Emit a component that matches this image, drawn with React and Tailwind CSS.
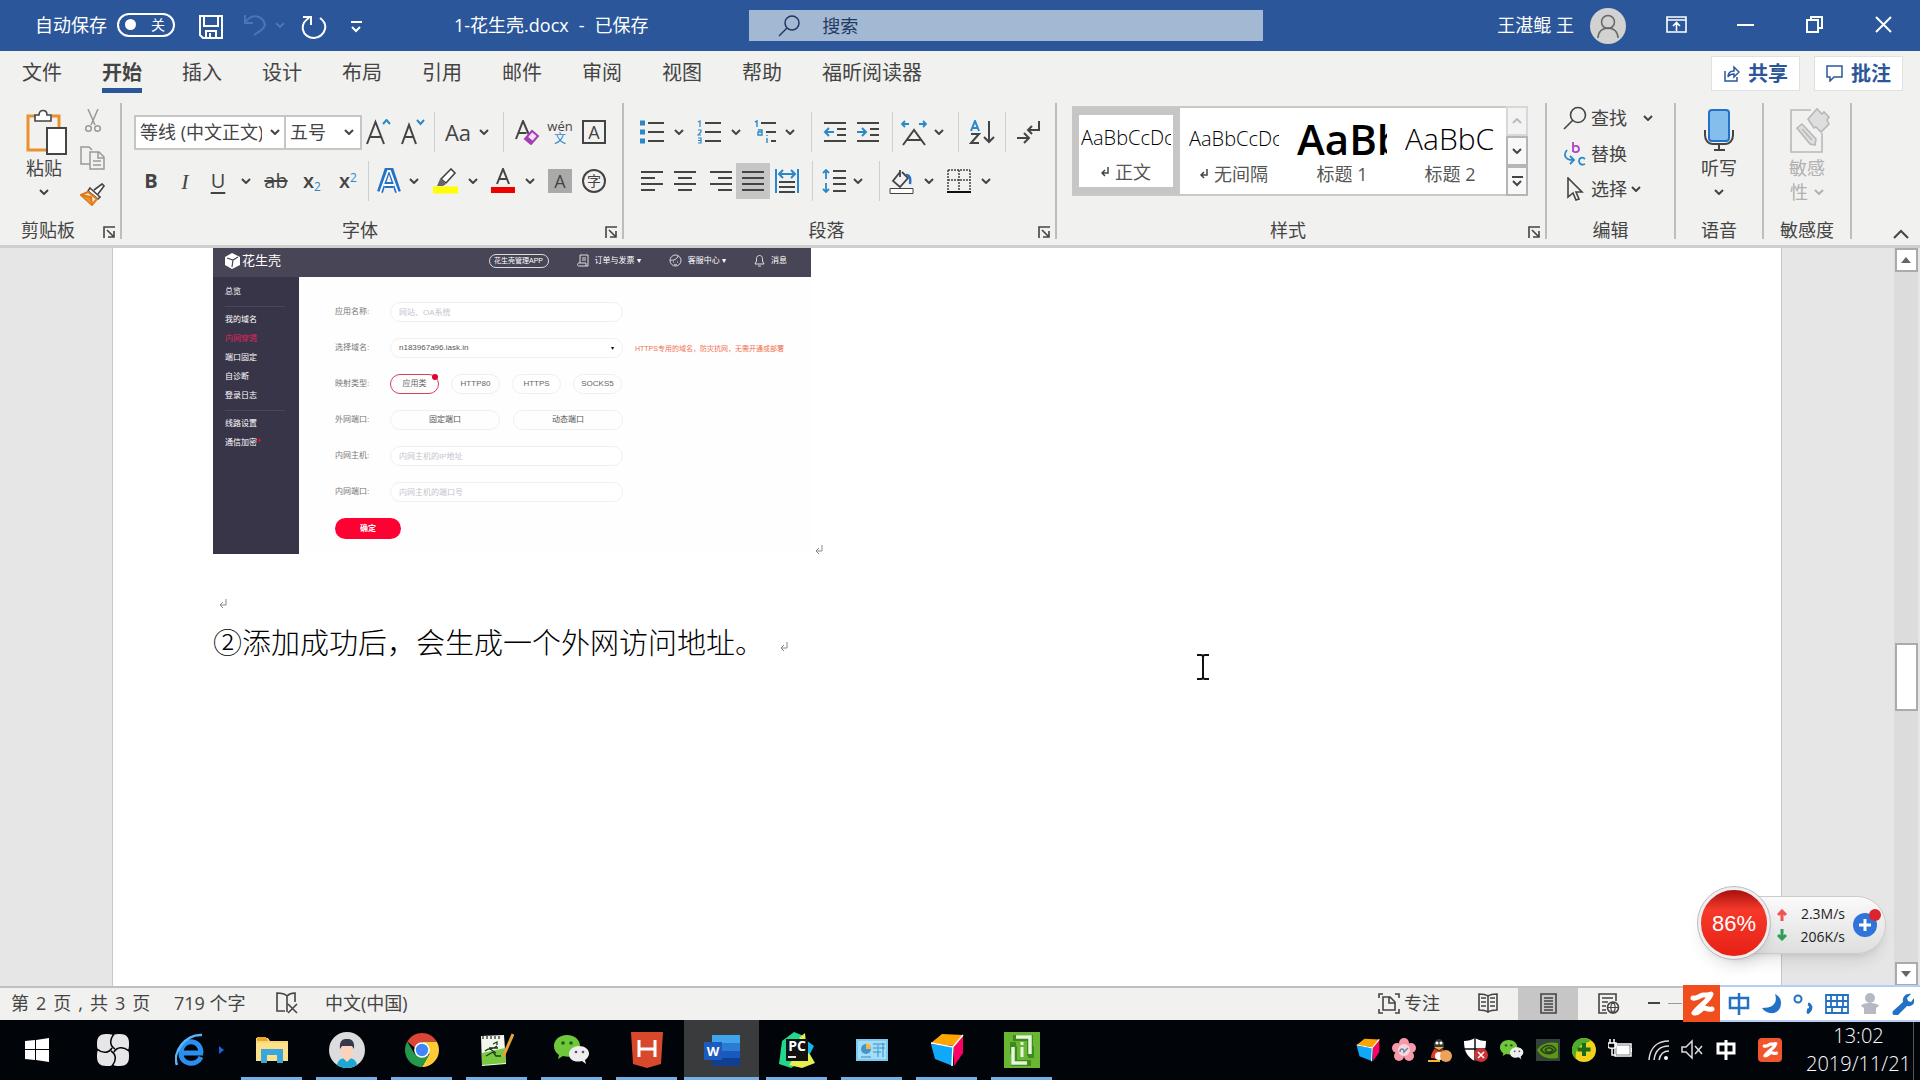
import { useState } from 'react';

const TABS = ['文件', '开始', '插入', '设计', '布局', '引用', '邮件', '审阅', '视图', '帮助', '福昕阅读器'];

const STYLES = [
  { sample: 'AaBbCcDc', name: '正文', mark: true, look: 'text-xl font-light' },
  { sample: 'AaBbCcDc', name: '无间隔', mark: true, look: 'text-xl font-light' },
  { sample: 'AaBb', name: '标题 1', look: 'text-[42px] font-semibold' },
  { sample: 'AaBbC', name: '标题 2', look: 'text-[30px] font-light' },
];

const BLUE = '#2b88c8';

function Svg({ w = 24, h = 24, vw = w, vh = h, children, className = '', stroke = '#444', sw = 2 }) {
  return (
    <svg width={w} height={h} viewBox={`0 0 ${vw} ${vh}`} fill="none" stroke={stroke} strokeWidth={sw} className={`shrink-0 ${className}`} aria-hidden="true">
      {children}
    </svg>
  );
}

function Chevron({ stroke = '#444' }) {
  return <Svg w={10} h={6} stroke={stroke}><path d="M1 1l4 4 4-4" /></Svg>;
}

function Tool({ label, className = '', children }) {
  return (
    <button type="button" aria-label={label} className={`flex h-9 shrink-0 items-center justify-center text-[#444] ${className}`}>
      {children}
    </button>
  );
}

function Sep({ className = '' }) {
  return <span className={`flex h-10 shrink-0 justify-center ${className}`}><span className="w-px bg-[#d0d0d0]" /></span>;
}

function Lines({ rows }) {
  return rows.map(([a, b, y]) => <path key={y} d={`M${a} ${y}H${b}`} />);
}

function Group({ title, launcher, className = '', titleClass = '', children }) {
  return (
    <section className={`relative flex h-[136px] shrink-0 flex-col border-r-2 border-[#bdbdbd] ${className}`}>
      {children}
      <div className={`mt-auto flex h-[18px] items-center justify-center text-lg leading-none ${titleClass}`}>{title}</div>
      {launcher && (
        <button type="button" aria-label={`${title}设置`} className="absolute right-1 bottom-0">
          <Svg w={13} h={13}><path d="M1 12V1h11M4 4l6 6M11 5v6H5" strokeWidth="1.6" /></Svg>
        </button>
      )}
    </section>
  );
}

function TitleBar() {
  return (
    <header className="relative flex h-[51px] shrink-0 items-center bg-[#2b579a] pb-0.5 pl-[35px] text-lg text-white">
      <label htmlFor="autosave" className="whitespace-nowrap">自动保存</label>
      <button id="autosave" type="button" role="switch" aria-checked="false" className="ml-2.5 flex h-6 w-[58px] items-center rounded-full border-2 border-white pr-2 pl-1.5">
        <span className="size-[11px] rounded-full bg-white" />
        <span className="ml-auto text-sm leading-none">关</span>
      </button>
      <button type="button" aria-label="保存" className="mt-1 ml-6">
        <Svg w={24} h={24} stroke="#fff"><path d="M1 1h22v22H4l-3-3zM5 1v10h14V1M7 23v-7h10v7M11 18v5" /></Svg>
      </button>
      <button type="button" aria-label="撤消" className="ml-5 flex items-center gap-2">
        <Svg w={24} h={24} stroke="#4a76b8"><path d="M2 2v8h8M2 10c4-7 12-9 17-4s4 9-8 16" /></Svg>
        <Chevron stroke="#4a76b8" />
      </button>
      <button type="button" aria-label="重复" className="mt-1 ml-4">
        <Svg w={26} h={26} stroke="#fff"><path d="M2 3h8v8M8 4c-5 3-7 7-6 12 1 5 6 8 11 8s10-4 11-9c1-4-1-8-5-11" /></Svg>
      </button>
      <button type="button" aria-label="自定义快速访问工具栏" className="mt-1 ml-6">
        <Svg w={11} h={12} stroke="#fff"><path d="M0 1h11M1 6l4 4 4-4" /></Svg>
      </button>
      <h1 className="ml-[92px] flex gap-2.5 whitespace-nowrap">
        <span>1-花生壳.docx</span>
        <span>-</span>
        <span>已保存</span>
      </h1>

      <div className="mt-0.5 ml-auto flex h-[31px] w-[514px] items-center bg-[#a3b9d3] pl-[29px] text-[#1f3864]">
        <Svg w={22} h={22} stroke="#1f3864" sw={1.5}><circle cx="14" cy="8" r="7" /><path d="M9 13l-8 8" /></Svg>
        <input aria-label="搜索" placeholder="搜索" className="ml-[22px] flex-1 bg-transparent outline-none placeholder:text-[#1f3864]" />
      </div>

      <span className="ml-[234px] whitespace-nowrap">王湛鲲 王</span>
      <span className="mt-0.5 ml-4 flex size-9 items-center justify-center rounded-full bg-[#d2d2d2]">
        <Svg w={22} h={24} stroke="#666" sw={1.5}><circle cx="11" cy="8" r="6.5" /><path d="M1 24c0-6 4-10 10-10s10 4 10 10" /></Svg>
      </span>
      <button type="button" aria-label="功能区显示选项" className="ml-10">
        <Svg w={21} h={17} stroke="#fff"><path d="M1 1h19v15H1zM1 4h19M10.500 15V7M7 10l3.500-3.500L14 10" strokeWidth="1.600" /></Svg>
      </button>
      <button type="button" aria-label="最小化" className="ml-[50px]"><Svg w={17} h={17} stroke="#fff"><path d="M0 9h17" /></Svg></button>
      <button type="button" aria-label="向下还原" className="ml-[52px]"><Svg w={17} h={17} stroke="#fff"><path d="M1 4h11v12H1zM5 4V1h11v11h-4" /></Svg></button>
      <button type="button" aria-label="关闭" className="mr-7 ml-[52px]"><Svg w={17} h={17} stroke="#fff"><path d="M1 1l15 15M16 1L1 16" /></Svg></button>
    </header>
  );
}

function TabBar({ active, onSelect }) {
  return (
    <nav className="flex h-[49px] shrink-0 pr-[17px] pl-0.5 text-xl">
      {TABS.map((tab) => (
        <button key={tab} type="button" onClick={() => onSelect(tab)} className="flex flex-col items-center px-5 pt-[7px] whitespace-nowrap">
          <span className={`leading-[30px] ${tab === active ? 'font-bold' : ''}`}>{tab}</span>
          {tab === active && <span className="h-[5px] w-full bg-[#2b579a]" />}
        </button>
      ))}
      <div className="mt-[5px] ml-auto flex gap-3.5 font-bold text-[#2b579a]">
        <button type="button" className="flex h-[35px] items-center gap-2 border border-[#e1e1e1] bg-white px-[11px]">
          <Svg w={17} h={17} stroke="#2b579a" sw={1.5}><path d="M2 6v10h12v-4M5 12c0-5 3-6 6-6V2l5 5-5 5V9c-3 0-5 1-6 3z" /></Svg>
          共享
        </button>
        <button type="button" className="flex h-[35px] items-center gap-2 border border-[#e1e1e1] bg-white px-[11px]">
          <Svg w={17} h={17} stroke="#2b579a" sw={1.5}><path d="M1 1h15v11H8l-4 4v-4H1z" /></Svg>
          批注
        </button>
      </div>
    </nav>
  );
}

function ClipboardGroup() {
  return (
    <Group title="剪贴板" launcher className="w-[122px]" titleClass="pr-6">
      <div className="flex pt-1.5 pl-[26px]">
        <button type="button" className="flex w-9 flex-col items-center text-lg leading-none whitespace-nowrap">
          <Svg w={42} h={46} className="ml-1.5">
            <path d="M9 7H2v34h18M26 7h7v12" stroke="#e8912d" strokeWidth="3" />
            <path d="M9 12V6h4c0-6 8-6 8 0h4v6z" fill="#fff" strokeWidth="1.600" />
            <path d="M21 19h19v26H21z" fill="#fff" />
          </Svg>
          <span className="mt-1">粘贴</span>
          <span className="mt-3"><Chevron /></span>
        </button>
        <div className="ml-[18px] flex flex-col items-center gap-[13px]">
          <button type="button" aria-label="剪切">
            <Svg w={16} h={24} stroke="#999" sw={1.5}><path d="M3 0l7 16M13 0L6 16" /><circle cx="3.500" cy="19.500" r="2.800" /><circle cx="12.500" cy="19.500" r="2.800" /></Svg>
          </button>
          <button type="button" aria-label="复制">
            <Svg w={25} h={24} stroke="#999" sw={1.5}><path d="M10 18H1V1h8l3 3M10 6h9l5 5v12H10zM18 6v6h6M13 15h8M13 19h8" /></Svg>
          </button>
          <button type="button" aria-label="格式刷">
            <Svg w={25} h={23}><path d="M14 7l8-6 2 2-6 8M10 5l10 9-2 2L8 8z" fill="#fff" strokeWidth="1.600" /><path d="M8 9L1 12l11 10 5-6z" fill="#fce4c8" stroke="#dd7b1c" /><path d="M1 12l10 2 1 8" stroke="#dd7b1c" fill="#e8912d" /></Svg>
          </button>
        </div>
      </div>
    </Group>
  );
}

function FontGroup() {
  return (
    <Group title="字体" launcher className="w-[502px] pl-3" titleClass="pr-9">
      <div className="mt-[11px] flex h-9 items-center text-lg">
        <div className="relative flex h-[35px] w-[152px] items-center border-2 border-[#c6c6c6] bg-white">
          <select aria-label="字体名称" className="h-full w-[126px] appearance-none overflow-hidden pl-1 text-[#444] outline-none">
            <option>等线 (中文正文)</option>
          </select>
          <span className="pl-2"><Chevron /></span>
        </div>
        <div className="flex h-[35px] w-[76px] items-center border-2 border-l-0 border-[#c6c6c6] bg-white">
          <select aria-label="字号" className="h-full w-[58px] appearance-none pl-1 text-[#444] outline-none">
            <option>五号</option>
          </select>
          <Chevron />
        </div>
        <Tool label="增大字号" className="w-[34px]">
          <Svg w={26} h={26}><path d="M1 25L9.500 3 18 25M4 18h11" /><path d="M17 5l3.500-4L24 5" stroke={BLUE} /></Svg>
        </Tool>
        <Tool label="减小字号" className="w-[34px]">
          <Svg w={24} h={26}><path d="M1 25L8 6l7 19M3.500 18h9" /><path d="M16 1l3.500 4L23 1" stroke={BLUE} /></Svg>
        </Tool>
        <Sep className="w-2" />
        <Tool label="更改大小写" className="w-10 text-[22px]">Aa</Tool>
        <Tool label="大小写选项" className="w-3"><Chevron /></Tool>
        <Sep className="w-[26px]" />
        <Tool label="清除所有格式" className="w-[22px]">
          <Svg w={25} h={25}><path d="M1 19L8 1l6 14M3.500 13h8" /><path d="M10 19l7-8 6 5-7 8z" stroke="#a33fb5" fill="#f3e0f6" /><path d="M10 19l6 5 2-3-6-5z" fill="#a33fb5" stroke="none" /></Svg>
        </Tool>
        <Tool label="拼音指南" className="w-11 flex-col text-[13px] leading-[13px]">
          <span>wén</span>
          <span className="text-xs leading-3 text-[#2b88c8]">文</span>
        </Tool>
        <Tool label="字符边框" className="w-6"><span className="flex size-6 items-center justify-center border-2 border-[#444] text-lg leading-none">A</span></Tool>
      </div>
      <div className="mt-[13px] flex h-9 items-center">
        <Tool label="加粗" className="w-[34px] text-xl font-bold">B</Tool>
        <Tool label="倾斜" className="w-[34px] font-['Liberation_Serif',serif] text-[22px] italic">I</Tool>
        <Tool label="下划线" className="w-8 text-xl underline underline-offset-4">U</Tool>
        <Tool label="下划线选项" className="w-6"><Chevron /></Tool>
        <Tool label="删除线" className="w-9 text-xl line-through">ab</Tool>
        <Tool label="下标" className="w-9 text-xl leading-none font-semibold"><span>x<sub className="text-xs font-normal text-[#2b88c8]">2</sub></span></Tool>
        <Tool label="上标" className="w-9 text-xl leading-none font-semibold"><span>x<sup className="text-xs font-normal text-[#2b88c8]">2</sup></span></Tool>
        <Sep className="w-1" />
        <Tool label="文本效果" className="w-[38px]">
          <Svg w={24} h={26}><path d="M3 24L10 3h4l7 21M8 17h8" stroke="#2472c8" strokeWidth="6" /><path d="M3 25l8-22h2l8 22M7 17h10" stroke="#fff" strokeWidth="1.800" /></Svg>
        </Tool>
        <Tool label="文本效果选项" className="w-3"><Chevron /></Tool>
        <Tool label="突出显示" className="ml-2 w-9">
          <Svg w={26} h={26}><path d="M8 11L18 1l4 4-9 10z" fill="#fff" strokeWidth="1.600" /><path d="M7 11l6 5-3 2H4z" fill="#666" stroke="none" /><path d="M0 22h25" stroke="#ff0" strokeWidth="7" /></Svg>
        </Tool>
        <Tool label="突出显示颜色" className="w-[18px]"><Chevron /></Tool>
        <Tool label="字体颜色" className="w-[42px]">
          <Svg w={24} h={26}><path d="M6 16l6-15 6 15M8 11h8" /><path d="M0 22h24" stroke="#e00" strokeWidth="6" /></Svg>
        </Tool>
        <Tool label="字体颜色选项" className="w-3"><Chevron /></Tool>
        <Tool label="字符底纹" className="ml-3 w-6"><span className="flex size-6 items-center justify-center bg-[#aaa] text-lg leading-none">A</span></Tool>
        <Tool label="带圈字符" className="ml-2.5 w-6"><span className="flex size-6 shrink-0 items-center justify-center rounded-full border-2 border-[#444] text-sm leading-none">字</span></Tool>
      </div>
    </Group>
  );
}

function ParagraphGroup() {
  return (
    <Group title="段落" launcher className="w-[433px] pl-4" titleClass="pr-[42px]">
      <div className="mt-[11px] flex h-9 items-center">
        <Tool label="项目符号" className="w-6">
          <Svg><path d="M8 3h16M8 12h16M8 21h16" /><path d="M0 3h5M0 12h5M0 21h5" stroke={BLUE} strokeWidth="5" /></Svg>
        </Tool>
        <Tool label="项目符号选项" className="w-[30px]"><Chevron /></Tool>
        <Tool label="编号" className="w-[30px]">
          <Svg><path d="M8 3h16M8 12h16M8 21h16" /><path d="M1 2l2-1v6M1 10h3v2l-3 3h3M1 18h3v5H1M1 20.500h3" stroke={BLUE} strokeWidth="1.200" /></Svg>
        </Tool>
        <Tool label="编号选项" className="w-6"><Chevron /></Tool>
        <Tool label="多级列表" className="w-[34px]">
          <Svg><path d="M8 3h15M13 12h10M18 21h5" /><path d="M2 2l2-1v6M5 10h4v5H5v-3h4M14 18v5M14 15v1" stroke={BLUE} strokeWidth="1.400" /></Svg>
        </Tool>
        <Tool label="多级列表选项" className="w-4"><Chevron /></Tool>
        <Sep className="w-[26px]" />
        <Tool label="减少缩进量" className="w-[22px]">
          <Svg><Lines rows={[[1, 23, 3], [14, 23, 9], [14, 23, 15], [1, 23, 21]]} /><path d="M11 12H2M6 8l-4 4 4 4" stroke={BLUE} /></Svg>
        </Tool>
        <Tool label="增加缩进量" className="w-11">
          <Svg><Lines rows={[[1, 23, 3], [14, 23, 9], [14, 23, 15], [1, 23, 21]]} /><path d="M1 12h9M6 8l4 4-4 4" stroke={BLUE} /></Svg>
        </Tool>
        <Sep className="w-1" />
        <Tool label="中文版式" className="w-10">
          <Svg w={26} h={28}><path d="M2 27L13 12l11 15M6 22h14" /><path d="M1 6h7M4 3L1 6l3 3M25 6h-7M22 3l3 3-3 3" stroke={BLUE} strokeWidth="1.800" /></Svg>
        </Tool>
        <Tool label="中文版式选项" className="w-2.5"><Chevron /></Tool>
        <Sep className="w-7" />
        <Tool label="排序" className="w-5">
          <Svg w={26}><path d="M2 11l4-10 4 10M3 8h6" stroke={BLUE} /><path d="M2 14h8L2 23h8M20 1v21M15 17l5 5 5-5" /></Svg>
        </Tool>
        <Sep className="w-[26px]" />
        <Tool label="显示编辑标记" className="w-5">
          <Svg><path d="M23 1v9H12M16 6l-4 4 4 4M1 18h11M8 13l5 5-5 5" /></Svg>
        </Tool>
      </div>
      <div className="mt-[13px] flex h-9 items-center">
        <Tool label="左对齐" className="w-6"><Svg><Lines rows={[[1, 23, 3], [1, 15, 9], [1, 23, 15], [1, 15, 21]]} /></Svg></Tool>
        <Tool label="居中" className="w-[42px]"><Svg><Lines rows={[[1, 23, 3], [5, 19, 9], [1, 23, 15], [5, 19, 21]]} /></Svg></Tool>
        <Tool label="右对齐" className="w-[30px]"><Svg><Lines rows={[[1, 23, 3], [9, 23, 9], [1, 23, 15], [9, 23, 21]]} /></Svg></Tool>
        <Tool label="两端对齐" className="w-[34px] bg-[#c6c6c6]"><Svg><Lines rows={[[1, 23, 3], [1, 23, 9], [1, 23, 15], [1, 23, 21]]} /></Svg></Tool>
        <Tool label="分散对齐" className="w-[34px]">
          <Svg><path d="M1 0v24M23 0v24M4 5h16M8 1L4 5l4 4M16 1l4 4-4 4" stroke={BLUE} /><path d="M4 13h16M4 18h16M4 23h16" /></Svg>
        </Tool>
        <Sep className="w-4" />
        <Tool label="行距" className="w-7">
          <Svg><path d="M11 2h13M11 9h13M11 15h13M11 22h13" /><path d="M4 1v9M1 4l3-3 3 3M4 14v9M1 20l3 3 3-3" stroke={BLUE} strokeWidth="1.800" /></Svg>
        </Tool>
        <Tool label="行距选项" className="w-5"><Chevron /></Tool>
        <Sep className="w-[22px]" />
        <Tool label="底纹" className="w-6">
          <Svg w={26} h={26}><path d="M11 2v7M11 4L4 13l7 6 8-9-6-6" strokeWidth="1.800" /><path d="M17 7c4 0 5 4 4 9" stroke="#2472c8" strokeWidth="2.500" /><path d="M1 20.500h23v5H1z" fill="#fff" strokeWidth="1" /></Svg>
        </Tool>
        <Tool label="底纹选项" className="w-[30px]"><Chevron /></Tool>
        <Tool label="边框" className="w-[30px]">
          <Svg><path d="M1 1h22M1 11h22M1 1v20M12 1v20M23 1v20" strokeDasharray="2 1" strokeWidth="1.500" /><path d="M0 23h24" stroke="#111" /></Svg>
        </Tool>
        <Tool label="边框选项" className="w-6"><Chevron /></Tool>
      </div>
    </Group>
  );
}

function StylesGroup() {
  return (
    <Group title="样式" launcher className="min-w-[490px] flex-1 pr-[17px] pl-[15px]" titleClass="pr-6">
      <div className="mt-[3px] flex h-[90px] border-y-2 border-[#c9c9c9] bg-white">
        <div className="flex flex-1">
          {STYLES.map((s, i) => (
            <button key={s.name} type="button" className={`flex w-[108px] flex-col items-center ${i === 0 ? 'border-7 border-[#c6c6c6] pt-1' : 'pt-[11px]'}`}>
              <span className={`flex h-10 w-[90px] items-center overflow-hidden leading-none whitespace-nowrap text-black ${s.look}`}>{s.sample}</span>
              <span className="flex items-center gap-1.5 text-lg leading-[30px] text-[#555]">
                {s.mark && <Svg w={8} h={10} sw={1.500}><path d="M7 0v6H1M4 3L1 6l3 3" /></Svg>}
                {s.name}
              </span>
            </button>
          ))}
        </div>
        <div className="-my-0.5 flex w-[22px] flex-col">
          <button type="button" aria-label="上一行" className="flex flex-1 items-center justify-center border-2 border-[#d8d8d8] bg-[#f3f3f3]"><Svg w={10} h={6} stroke="#bbb"><path d="M1 5l4-4 4 4" /></Svg></button>
          <button type="button" aria-label="下一行" className="flex flex-1 items-center justify-center border-2 border-[#b5b5b5] bg-[#f8f8f8]"><Chevron /></button>
          <button type="button" aria-label="其他" className="flex flex-1 items-center justify-center border-2 border-[#b5b5b5] bg-[#f8f8f8]"><Svg w={11} h={11}><path d="M0 1h11M1 5l4 4 4-4" /></Svg></button>
        </div>
      </div>
    </Group>
  );
}

function Ribbon() {
  return (
    <div className="flex h-[148px] shrink-0 border-b-3 border-[#cfcfcf] pt-[3px]">
      <ClipboardGroup />
      <FontGroup />
      <ParagraphGroup />
      <StylesGroup />
      <Group title="编辑" className="w-[129px]">
        <div className="flex flex-col pt-[3px] pl-4 text-lg leading-none">
          <button type="button" className="flex h-6 items-center">
            <Svg w={24} h={24}><circle cx="15" cy="9" r="7.500" strokeWidth="1.600" /><path d="M10 14l-9 9" strokeWidth="1.600" /></Svg>
            <span className="mr-4 ml-1">查找</span>
            <Chevron />
          </button>
          <button type="button" className="mt-3 flex h-6 items-center">
            <Svg w={24} h={26} sw={1.800}><path d="M10 1v10M10 7c0-3 6-3 6 1s-6 4-6 1" stroke="#b146c2" /><path d="M22 18c-4-3-6 0-6 2s2 5 6 3M4 9c-4 5-2 10 6 10M7 15l4 4-4 4" stroke={BLUE} /></Svg>
            <span className="ml-1">替换</span>
          </button>
          <button type="button" className="mt-[11px] flex h-6 items-center">
            <Svg w={24} h={24} sw={1.600}><path d="M5 1v19l5-4 3 7 3-1-3-7h6z" /></Svg>
            <span className="mr-1 ml-1">选择</span>
            <Chevron />
          </button>
        </div>
      </Group>
      <Group title="语音" className="w-[88px]">
        <button type="button" className="flex flex-col items-center pt-1.5 text-lg leading-none">
          <Svg w={30} h={42}><path d="M1 21v5c0 5 3 9 8 9h12c5 0 8-4 8-9v-5M15 35v6M10 41h11" /><rect x="5" y="1" width="20" height="31" rx="3" fill="#83beec" stroke="#2472c8" /></Svg>
          <span className="mt-2">听写</span>
          <span className="mt-3"><Chevron /></span>
        </button>
      </Group>
      <Group title="敏感度" className="w-[88px]">
        <button type="button" disabled className="flex flex-col items-center pt-1 text-lg leading-none text-[#b0b0b0]">
          <Svg w={42} h={46} stroke="#b8b8b8" sw={1.600} className="ml-1.5">
            <path d="M22 3H2v42h31V26" /><path d="M8 21l5-4 14 15-1 6-5-1zM13 22l10 11M19 12l9-10 5 5 2-2 5 5-2 3 2 4-8 8-5-5-2 1z" fill="#dedede" />
          </Svg>
          <span className="mt-1.5">敏感</span>
          <span className="mt-1.5 flex items-center gap-1.5">性<Chevron stroke="#b0b0b0" /></span>
        </button>
      </Group>
      <div className="flex w-[69px] shrink-0 items-end justify-end pr-3 pb-1.5">
        <button type="button" aria-label="折叠功能区"><Svg w={16} h={10}><path d="M1 9l7-7 7 7" /></Svg></button>
      </div>
    </div>
  );
}

const SIDE_LINKS = [
  ['总览'],
  ['我的域名', '内网穿透', '端口固定', '自诊断', '登录日志'],
  ['线路设置', '通信加密'],
];

function FormRow({ label, id, children }) {
  return (
    <div className="flex h-5 items-center">
      <label htmlFor={id} className="w-[55px] text-[#777]">{label}</label>
      <div className="flex w-[233px] shrink-0 items-center">{children}</div>
    </div>
  );
}

function TunnelConsole() {
  const [type, setType] = useState('应用类');
  const field = 'h-5 w-full rounded-full border border-[#f0f0f0] bg-white px-2 text-[#555] outline-none placeholder:text-[#c4c4cc]';

  return (
    <div className="h-[306px] w-[598px] shrink-0 text-[8px] leading-none">
      <div className="flex h-[29px] items-center bg-[#484556] pb-1 pl-3 text-white">
        <Svg w={15} h={16} stroke="none"><path d="M7 0l8 4v8l-8 4-7-4V4z" fill="#fff" /><path d="M2 5l6 2 5-3M8 7L7 14" stroke="#484556" strokeWidth="1.200" /></Svg>
        <span className="ml-0.5 text-[13px]">花生壳</span>
        <button type="button" className="ml-auto h-[14px] w-[60px] rounded-full border border-white/80 text-[7px] whitespace-nowrap">花生壳管理APP</button>
        <Svg w={12} h={13} stroke="#ddd" sw={1} className="ml-7"><path d="M3 9V1h8v11H2c-2 0-2-3 0-3h7v3M5 4h4M5 6h4" /></Svg>
        <a href="#orders" className="ml-1.5 whitespace-nowrap">订单与发票 ▾</a>
        <Svg w={13} h={13} stroke="#ddd" sw={1} className="ml-7"><circle cx="6.500" cy="6.500" r="5.500" /><path d="M1 6c4 1 7-1 8-4M4 8h1M8 8h1M5 10c1 1 2 1 3 0" /></Svg>
        <a href="#support" className="ml-1.5 whitespace-nowrap">客服中心 ▾</a>
        <Svg w={11} h={13} stroke="#ddd" sw={1} className="ml-7"><path d="M1 10h9L8.500 7V4.500c0-4-6-4-6 0V7zM4 12h3" /></Svg>
        <a href="#messages" className="mr-6 ml-1.5">消息</a>
      </div>
      <div className="flex h-[277px]">
        <nav className="w-[86px] bg-[#383548] pt-1.5 pl-3 text-white">
          {SIDE_LINKS.map((links, i) => (
            <div key={links[0]} className={`mr-[14px] flex flex-col ${i ? 'mt-1 border-t border-[#4a475a] pt-1' : ''}`}>
              {links.map((link) => (
                <a key={link} href={`#${link}`} className={`h-[19px] leading-[18px] ${link === '内网穿透' ? 'text-[#e0245e]' : ''}`}>
                  {link}
                  {link === '通信加密' && <sup className="text-[#ff0036]">●</sup>}
                </a>
              ))}
            </div>
          ))}
        </nav>
        <form className="flex flex-1 flex-col gap-4 bg-[#fefefe] pt-[25px] pl-9">
          <FormRow label="应用名称:" id="app-name"><input id="app-name" placeholder="网站、OA系统" className={field} /></FormRow>
          <div className="flex items-center">
            <FormRow label="选择域名:" id="domain">
              <select id="domain" className={`${field} appearance-none`}><option>n183967a96.iask.in</option></select>
              <span className="-ml-3 text-[6px] text-black">▾</span>
            </FormRow>
            <span className="ml-3 text-[7px] whitespace-nowrap text-[#f0704f]">HTTPS专用的域名，防灾抗网，无需开通或部署</span>
          </div>
          <FormRow label="映射类型:" id="type-应用类">
            <div className="flex gap-3">
              {['应用类', 'HTTP80', 'HTTPS', 'SOCKS5'].map((t) => (
                <label key={t} className={`relative flex h-5 w-[49px] items-center justify-center rounded-full border text-[#666] ${t === type ? 'border-[#d8405c]' : 'border-[#f0f0f0]'}`}>
                  <input id={`type-${t}`} type="radio" name="type" checked={t === type} onChange={() => setType(t)} className="sr-only" />
                  {t}
                  {t === type && <span className="absolute -top-px right-0 size-1.5 rounded-full bg-[#e6002d]" />}
                </label>
              ))}
            </div>
          </FormRow>
          <FormRow label="外网端口:" id="fixed-port">
            <button id="fixed-port" type="button" className="h-5 w-[110px] rounded-full border border-[#f0f0f0] text-[#555]">固定端口</button>
            <button type="button" className="ml-auto h-5 w-[110px] rounded-full border border-[#f0f0f0] text-[#555]">动态端口</button>
          </FormRow>
          <FormRow label="内网主机:" id="host"><input id="host" placeholder="内网主机的IP地址" className={field} /></FormRow>
          <FormRow label="内网端口:" id="port"><input id="port" placeholder="内网主机的端口号" className={field} /></FormRow>
          <button type="button" className="h-[21px] w-[66px] rounded-full bg-[#ff0033] font-bold text-white">确定</button>
        </form>
      </div>
    </div>
  );
}

function ReturnMark() {
  return <Svg w={8} h={9} stroke="#888" sw={1}><path d="M7 0v6H1M4 3L1 6l3 3" /></Svg>;
}

function DocumentArea() {
  return (
    <main className="relative flex min-h-0 flex-1 overflow-hidden bg-[#e6e6e6] pl-[112px]">
      <article className="flex-1 border-x border-[#c8c8c8] bg-white pl-[100px] font-['Liberation_Sans','Noto_Sans_CJK_SC',sans-serif] text-black">
        <div className="flex items-end gap-1">
          <TunnelConsole />
          <ReturnMark />
        </div>
        <p className="flex h-[66px] items-end pb-3 pl-1.5"><ReturnMark /></p>
        <p className="flex items-center gap-4 text-[29px] leading-[48px] font-light">
          ②添加成功后，会生成一个外网访问地址。
          <span className="pt-1"><ReturnMark /></span>
        </p>
      </article>
      <Svg w={14} h={26} stroke="#111" sw={2} className="absolute top-[406px] left-[1196px]"><path d="M1 1h4c1 0 2 1 2 2 0-1 1-2 2-2h4M7 3v20M1 25h4c1 0 2-1 2-2 0 1 1 2 2 2h4" /></Svg>
      <div className="ml-[112px] flex w-[26px] flex-col items-center border-r-2 border-[#e6e6e6] bg-[#dcdcdc]">
        <button type="button" aria-label="向上滚动" className="flex h-6 w-[23px] items-center justify-center border-2 border-[#ababab] bg-white"><Svg w={10} h={6} stroke="none"><path d="M5 0l5 6H0z" fill="#666" /></Svg></button>
        <div className="flex w-full flex-1 flex-col items-center pt-[371px]"><span className="h-[68px] w-[23px] border-2 border-[#ababab] bg-white" /></div>
        <button type="button" aria-label="向下滚动" className="flex h-6 w-[23px] items-center justify-center border-2 border-[#ababab] bg-white"><Svg w={10} h={6} stroke="none"><path d="M0 0h10L5 6z" fill="#666" /></Svg></button>
      </div>
    </main>
  );
}

function NetWidget() {
  return (
    <aside className="absolute right-[34px] bottom-[121px] flex h-[72px] items-center">
      <div className="z-10 flex size-[72px] items-center justify-center rounded-full border-3 border-[#eee] bg-linear-to-b from-[#a80f0f] via-[#f5392a] via-30% to-[#e81f14] font-['Liberation_Sans',sans-serif] text-[22px] text-white shadow-lg outline-1 outline-[#bbb]">86%</div>
      <div className="mt-1 -ml-9 flex h-[58px] w-[152px] items-center rounded-r-full border border-[#ccc] bg-linear-to-b from-[#fafafa] to-[#dedede] pl-[42px] text-sm text-[#222] shadow-lg">
        <div className="flex w-3 flex-col gap-2">
          <Svg w={10} h={12} stroke="#ef5350" sw={3}><path d="M5 12V3M1 6l4-4 4 4" /></Svg>
          <Svg w={10} h={12} stroke="#2e9e5b" sw={3}><path d="M5 0v9M1 6l4 4 4-4" /></Svg>
        </div>
        <div className="w-[56px] text-right leading-[23px] whitespace-nowrap"><div>2.3M/s</div><div>206K/s</div></div>
        <button type="button" aria-label="加速" className="relative ml-2 flex size-6 items-center justify-center rounded-full bg-[#2f74d8]">
          <Svg w={14} h={14} stroke="#fff" sw={3}><path d="M7 1v12M1 7h12" /></Svg>
          <span className="absolute -top-1 -right-1 size-3 rounded-full bg-[#dc2430]" />
        </button>
      </div>
    </aside>
  );
}

function StatusBar() {
  return (
    <footer className="flex h-[34px] shrink-0 items-center border-t-2 border-[#c0c0c0] bg-[#f1f1ef] pb-0.5 pl-[11px] text-lg whitespace-nowrap">
      <span className="flex w-[163px] gap-[7px]">
        {['第', '2', '页', ',', '共', '3', '页'].map((part, i) => <span key={i}>{part}</span>)}
      </span>
      <span className="w-[102px]">719 个字</span>
      <Svg w={22} h={22} sw={1.600} className="mr-[27px]"><path d="M11 4C8 1 4 1 1 1v18h8M11 4c3-3 5-3 8-3v9M11 4v16M12 12l9 9M21 12l-9 9" /></Svg>
      <span>中文(中国)</span>
      <button type="button" className="mr-[30px] ml-auto flex items-center gap-1">
        <Svg w={22} h={21} sw={1.600}><path d="M5 1H1v4M17 1h4v4M5 20H1v-4M17 20h4v-4M5 4h7l5 5v8H5zM11 4v6h6" /></Svg>
        专注
      </button>
      <button type="button" aria-label="阅读视图" className="mx-2"><Svg w={20} h={20} sw={1.600}><path d="M10 3C7 1 4 1 1 1v16c4 0 6 0 9 2 3-2 5-2 9-2V1c-3 0-6 0-9 2zv16M3 5h5M3 9h5M3 13h5M12 5h5M12 9h5M12 13h5" /></Svg></button>
      <button type="button" aria-label="页面视图" className="-mb-0.5 ml-3 flex h-8 w-[60px] items-center justify-center bg-[#c6c6c6] pb-0.5"><Svg w={17} h={21} sw={1.600}><path d="M1 1h15v19H1zM4 5h9M4 8h9M4 11h9M4 14h9M4 17h9" /></Svg></button>
      <button type="button" aria-label="Web 版式视图" className="mr-2 ml-5"><Svg w={22} h={21} sw={1.600}><path d="M9 20H1V1h17v7M4 5h11M4 9h6M4 13h4M4 17h4" /><circle cx="15" cy="14.500" r="5.500" /><path d="M10 14.500h11M15 9c-3 3-3 8 0 11 3-3 3-8 0-11" strokeWidth="1.200" /></Svg></button>
      <button type="button" aria-label="缩小" className="mr-2 ml-5"><Svg w={12} h={12}><path d="M0 6h12" /></Svg></button>
      <span className="mr-[238px] h-px w-3.5 bg-[#999]" />
    </footer>
  );
}

function ImeBar() {
  return (
    <div className="absolute right-0 bottom-[58px] flex h-[37px] items-center border-y-2 border-[#b8cdf4] bg-white">
      <span className="-my-0.5 flex h-[37px] w-[37px] items-center justify-center bg-[#f04e1c]"><ZLogo size={28} /></span>
      <div className="flex w-[200px] items-center justify-between pr-1.5 pl-2">
        <Svg w={22} h={22} stroke="#2271c4" sw={2.500}><path d="M2 5h18v10H2zM11 0v22" /></Svg>
        <Svg w={20} h={20} stroke="none"><path d="M13 0c3 9-2 14-13 14 5 8 19 7 19-5 0-4-2-7-6-9z" fill="#2271c4" /></Svg>
        <Svg w={20} h={20} stroke="#2271c4"><circle cx="5" cy="5" r="3.500" /><path d="M15 10a3 3 0 1 1-1 6M18 12c0 4-2 6-4 7" strokeWidth="3" /></Svg>
        <Svg w={24} h={20} stroke="#2271c4" sw={1.800}><path d="M1 1h22v18H1zM1 7h22M1 13h22M6 1v12M12 1v12M18 1v12M7 13v6M17 13v6" /></Svg>
        <Svg w={20} h={22} stroke="none"><circle cx="10" cy="5" r="5" fill="#b4b9c4" /><path d="M1 13c1-4 17-4 18 0l-3 2v6H4v-6z" fill="#b4b9c4" /></Svg>
        <Svg w={22} h={22} stroke="none"><path d="M1 18L11 9c-1-5 3-9 8-8l-4 4 1 3 3 1 3-4c2 5-2 9-7 8L6 22c-3 2-7-1-5-4z" fill="#2271c4" /></Svg>
      </div>
    </div>
  );
}

function ZLogo({ size }) {
  return <Svg w={size} h={size} vw={28} vh={28} stroke="#fff" sw={5}><path d="M5 8c5 1 7-3 10-3s5 0 8-1c-2 7-11 11-17 19 5 1 7-5 10-5s3 2 8 1" strokeLinejoin="round" strokeLinecap="round" /></Svg>;
}

function Cube({ size }) {
  return (
    <Svg w={size} h={size} vw={34} vh={34} stroke="none">
      <path d="M1 10L12 1l21 1-9 11z" fill="#ffa500" /><path d="M1 11l22 3v19L5 26z" fill="#0fa8fa" /><path d="M24 14l9-12v18l-9 13z" fill="#ff0066" />
      <path d="M1 10l22 4 10-12M23 14l-1 19" stroke="#fff" strokeWidth="1.500" />
    </Svg>
  );
}

function WeChat({ w, h }) {
  return (
    <Svg w={w} h={h} vw={36} vh={30} stroke="none">
      <path d="M13 0C5 0 0 5 0 11c0 4 2 7 5 9l-1 4 5-3c12 3 17-4 17-10C26 5 21 0 13 0z" fill="#6fc83a" />
      <circle cx="9" cy="8" r="1.800" fill="#1f5a1c" /><circle cx="17" cy="8" r="1.800" fill="#1f5a1c" />
      <path d="M25 11c-6 0-10 4-10 8 0 6 6 9 13 7l4 3-1-4c8-6 3-14-6-14z" fill="#eee" />
      <circle cx="22" cy="17" r="1.300" fill="#556" /><circle cx="29" cy="17" r="1.300" fill="#556" />
    </Svg>
  );
}

const APPS = [
  {
    name: '文件资源管理器',
    icon: <Svg w={32} h={28} stroke="none"><path d="M0 2h12l2 3h18v20H0z" fill="#fbd774" /><path d="M1 1h9l2 4H1z" fill="#e9a92c" /><path d="M0 7h32v18H0z" fill="#fde08a" /><path d="M5 13h22v14h-6v-8H11v8H5z" fill="#39a6dc" /></Svg>,
  },
  {
    name: '用户',
    icon: <Svg w={36} h={36} stroke="none"><circle cx="18" cy="18" r="18" fill="#dcdcdc" /><path d="M8 33c1-6 5-7 10-7s9 1 10 7c-6 4-14 4-20 0z" fill="#1ba8d6" /><path d="M12 14h12v7c0 4-3 6-6 6s-6-2-6-6z" fill="#fbd3bd" /><path d="M13 25h10l-5 5z" fill="#fbd3bd" /><path d="M11 17c-1-9 3-10 7-10s8 1 7 10l-2-3H13z" fill="#36394e" /></Svg>,
  },
  {
    name: 'Chrome',
    icon: <Svg w={34} h={34} stroke="none"><path d="M31.700 8.500A17 17 0 0 1 17 34l7.400-13L17 8.500z" fill="#fbcb35" /><path d="M2.300 8.500a17 17 0 0 1 29.400 0H17v12z" fill="#dc4535" /><path d="M2.300 8.500L9.600 21l7.400 3 7.400-3L17 34A17 17 0 0 1 2.300 8.500z" fill="#25994b" /><circle cx="17" cy="17" r="7.800" fill="#fff" /><circle cx="17" cy="17" r="6.200" fill="#4285f4" /></Svg>,
  },
  {
    name: 'Notepad++',
    icon: <Svg w={34} h={34} stroke="none"><path d="M1 3l23-1 2 29-24 2z" fill="#f4f6ee" /><path d="M2 20l23-5 1 15-24 2z" fill="#7ac943" /><path d="M3 3v3M7 3v3M11 3v3M15 3v3M19 3v3" stroke="#777" /><path d="M5 18c4-4 9-1 12-5M9 15h9M13 11l4-2v3M6 23l7-4 3 4h5M10 16l6 4" stroke="#1c3c16" strokeWidth="1.300" /><path d="M33 1L23 24" stroke="#e4a23c" strokeWidth="3" /></Svg>,
  },
  { name: '微信', icon: <WeChat w={36} h={32} /> },
  {
    name: 'HBuilder',
    icon: <Svg w={32} h={36} stroke="none"><path d="M0 0h32l-2 32-14 4-14-4z" fill="#d8482d" /><path d="M8 8v17M24 8v17M8 17h16" stroke="#fff" strokeWidth="3" /></Svg>,
  },
  {
    name: 'Word',
    active: true,
    icon: <Svg w={36} h={34} stroke="none"><path d="M8 2h28v9H8z" fill="#41a5ee" /><path d="M8 10h28v8H8z" fill="#2b7cd3" /><path d="M8 18h28v8H8z" fill="#185abd" /><path d="M8 25h28v8H8z" fill="#103f91" /><path d="M0 9h18v18H0z" fill="#1b5bbf" /><text x="9" y="23" textAnchor="middle" fontSize="13" fontWeight="700" fill="#fff">W</text></Svg>,
  },
  {
    name: 'PyCharm',
    icon: <Svg w={36} h={36} stroke="none"><path d="M3 9L15 0l10 4 3 22-16 10-12-4z" fill="#21d789" /><path d="M20 6l6-5 1 10zM25 12l11 19-13 5-13-3z" fill="#e5f04f" /><path d="M27 8l8 6-4 8-4-2z" fill="#18b5e8" /><path d="M7 7h22v22H7z" fill="#111" /><path d="M9 25h8" stroke="#fff" strokeWidth="1.800" /><text x="18" y="19" textAnchor="middle" fontSize="14" fontWeight="700" fill="#fff">PC</text></Svg>,
  },
  {
    name: '控制面板',
    icon: <Svg w={32} h={22} stroke="none"><path d="M0 0h32v22H0z" fill="#7cc8ee" /><path d="M2 2h28v18H2z" fill="#a3ddf8" /><circle cx="10" cy="10" r="5" fill="#4294cb" /><path d="M10 10V4a6 6 0 0 1 5 6z" fill="#f4b740" /><path d="M17 5h12M17 9h4M23 9h6M17 13h8M27 4v14M22 6v12M5 18h10" stroke="#378cc4" strokeWidth="1" /></Svg>,
  },
  { name: '花生壳', icon: <Cube size={34} /> },
  {
    name: '内网助手',
    icon: <Svg w={36} h={36} stroke="none"><path d="M0 0h36v36H0z" fill="#68b632" /><path d="M9 22V10M9 6h17v18M27 14v12M27 31H10V14" stroke="#3f8a1c" strokeWidth="6" /><path d="M12 5h14v17M9 15v16h14" stroke="#e6f5df" strokeWidth="3.500" /><path d="M18 15v10M18 10v3" stroke="#e6f5df" strokeWidth="3" /></Svg>,
  },
];

function Tray() {
  return (
    <div className="flex items-center">
      <div className="flex items-center gap-3">
        <Cube size={24} />
        <Svg stroke="none">
          <g fill="#f49aa8"><circle cx="12" cy="5" r="5" /><circle cx="19" cy="10" r="5" /><circle cx="17" cy="18" r="5" /><circle cx="7" cy="18" r="5" /><circle cx="5" cy="10" r="5" /><circle cx="12" cy="12" r="6" fill="#fbd5da" /></g>
          <path d="M8 14c0-4 4-4 4 0l4-4" stroke="#5a8fb5" strokeWidth="1.500" />
        </Svg>
        <Svg stroke="none"><path d="M3 20c0-5 2-6 4-10h7c3 4 4 8 3 12z" fill="#e2382c" /><ellipse cx="11" cy="7" rx="5" ry="6" fill="#3a3a3a" /><circle cx="9" cy="5" r="1.600" fill="#fff" /><circle cx="13" cy="5" r="1.600" fill="#fff" /><path d="M6 9h10l-5 3z" fill="#f5b52e" /><ellipse cx="11" cy="18" rx="4" ry="4" fill="#fff" /><circle cx="18" cy="18" r="6" fill="#eba35c" /><path d="M0 23h12" stroke="#f5b52e" strokeWidth="2" /></Svg>
        <Svg stroke="none"><path d="M11 0c3 2 7 3 11 3 0 10-3 16-11 20C3 19 0 13 0 3c4 0 8-1 11-3z" fill="#fff" /><path d="M11 0v23M0 11h22" stroke="#111" strokeWidth="1.500" /><circle cx="17" cy="17" r="7" fill="#c93434" /><path d="M14 14l6 6M20 14l-6 6" stroke="#fff" strokeWidth="1.500" /></Svg>
        <WeChat w={24} h={20} />
        <Svg stroke="none"><path d="M0 1h24v22H0z" fill="#33423a" /><path d="M1 12C6 4 16 4 22 5v15c-10 2-17-1-21-8z" fill="#5a9a12" /><path d="M5 12c4-6 12-6 15 0-4 5-11 5-15 0zM9 12c2-3 6-3 8 0-2 3-6 3-8 0" stroke="#2d3e20" strokeWidth="1.600" /></Svg>
        <Svg stroke="none"><circle cx="12" cy="12" r="12" fill="#f3d21c" /><path d="M12 0a12 12 0 0 0-8 21C2 10 10 6 19 3a12 12 0 0 0-7-3z" fill="#4cae2b" /><path d="M12 5v13M5.500 11.500h13" stroke="#176b1b" strokeWidth="4" /></Svg>
        <Svg stroke="#fff" sw={1.500}><path d="M7 6h16v12H7zM23.500 10v4" /><path d="M9 8h12v8H9z" fill="#fff" /><path d="M2 1v4M6 1v4M0 5h8v3c0 3-8 3-8 0zM4 10v7h4" /></Svg>
      </div>
      <Svg stroke="#ddd" sw={1.500} className="ml-4"><path d="M1 22C2 10 9 3 21 3M6 22C7 13 12 8 21 8M11 22c1-5 4-9 10-9" /><circle cx="18" cy="20" r="2" fill="#fff" stroke="none" /></Svg>
      <Svg stroke="#ddd" sw={1.500} className="ml-2"><path d="M2 9h4l6-6v17l-6-6H2zM15 8l7 8M22 8l-7 8" /></Svg>
      <Svg w={20} h={22} stroke="#fff" sw={3} className="ml-3"><path d="M2 5h16v9H2zM10 1v20" /></Svg>
      <span className="mr-[22px] ml-[22px] flex size-6 items-center justify-center rounded-sm bg-[#f0562c]"><ZLogo size={18} /></span>
    </div>
  );
}

function Taskbar() {
  return (
    <div className="flex h-[60px] shrink-0 items-center bg-[#010409] pl-px text-white">
      <button type="button" aria-label="开始菜单" className="flex w-[72px] justify-center"><Svg w={26} h={26} stroke="none"><path d="M1 4l10-1v9H1zM12 3l13-2v11H12zM1 13h10v10L1 22zM12 13h13v12l-13-2z" fill="#fff" /></Svg></button>
      <button type="button" aria-label="任务中心" className="flex w-20 justify-center">
        <Svg w={32} h={32} stroke="none"><path d="M9 0c3 0 5 0 7 1 2-1 4-1 7-1 6 0 9 3 9 9 0 3 0 5-1 7 1 2 1 4 1 7 0 6-3 9-9 9-3 0-5 0-7-1-2 1-4 1-7 1-6 0-9-3-9-9 0-3 0-5 1-7-1-2-1-4-1-7 0-6 3-9 9-9z" fill="#e6e6e8" /><path d="M18 15c-5-3-6-9-1-15M17 18c3-5 9-6 15-1M14 17c5 3 6 9 1 15M15 14c-3 5-9 6-15 1" stroke="#010409" strokeWidth="1.500" /></Svg>
      </button>
      <button type="button" aria-label="Internet Explorer" className="flex w-[81px] items-center justify-end gap-3.5 pr-2.5">
        <Svg w={30} h={34} stroke="none"><path d="M7 20h21M26 20c0-15-20-15-20 0 0 13 16 13 20 4" stroke="#2b8fef" strokeWidth="5" /><path d="M2 32C-3 20 10 1 27 2" stroke="#58b5fa" strokeWidth="2.500" /></Svg>
        <Svg w={5} h={8} stroke="none"><path d="M0 0l5 4-5 4z" fill="#1d62e0" /></Svg>
      </button>
      {APPS.map((app) => (
        <button key={app.name} type="button" aria-label={app.name} className={`relative flex h-full w-[75px] items-center justify-center ${app.active ? 'bg-[#3a3b3d]' : ''}`}>
          {app.icon}
          <span className={`absolute bottom-0 h-[3px] bg-[#76aee6] ${app.active ? 'w-full' : 'w-[61px]'}`} />
        </button>
      ))}
      <div className="ml-auto flex h-full items-center">
        <Tray />
        <div className="flex h-full w-[109px] flex-col items-center pt-0.5 text-xl leading-7 font-light">
          <span>13:02</span>
          <span>2019/11/21</span>
        </div>
        <span className="mr-1.5 h-full w-px bg-[#555]" />
      </div>
    </div>
  );
}

function App() {
  const [tab, setTab] = useState('开始');

  return (
    <div className="relative flex h-screen flex-col overflow-hidden bg-[#f1f1ef] font-['Open_Sans','Noto_Sans_CJK_SC',sans-serif] text-[#444]">
      <TitleBar />
      <TabBar active={tab} onSelect={setTab} />
      <Ribbon />
      <DocumentArea />
      <StatusBar />
      <Taskbar />
      <NetWidget />
      <ImeBar />
    </div>
  );
}

export default App;
